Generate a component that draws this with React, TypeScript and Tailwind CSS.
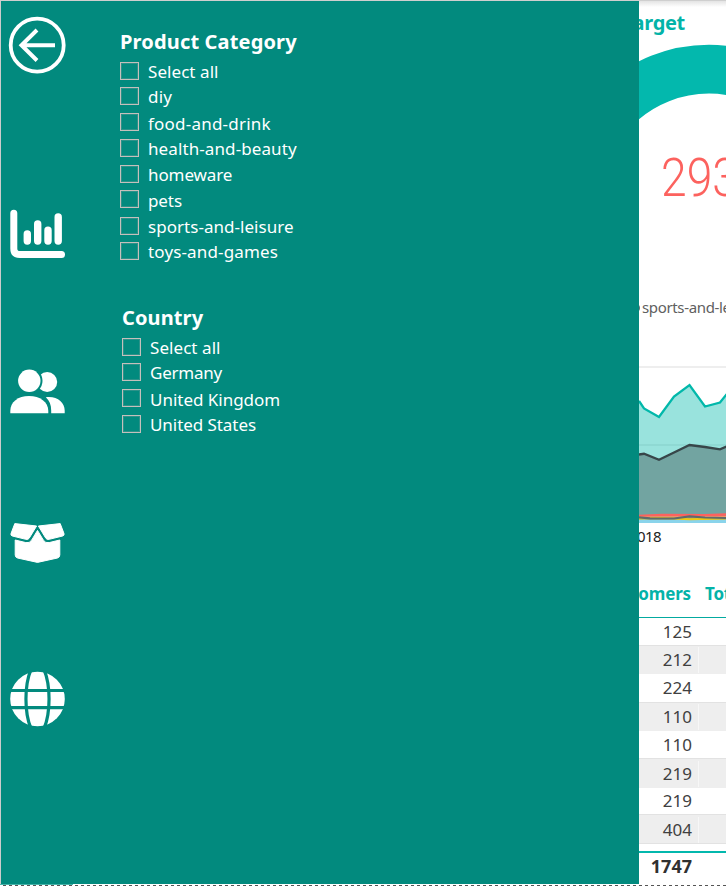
import React from 'react';

type Option = { label: string; row: string; text: string };

const categories: Option[] = [
  { label: 'Select all', row: 'h-[25px]', text: 'tracking-[0.06px]' },
  { label: 'diy', row: 'h-[26px]', text: 'tracking-[0.2px]' },
  { label: 'food-and-drink', row: 'h-[26px]', text: 'pt-px tracking-[0.22px]' },
  { label: 'health-and-beauty', row: 'h-[26px]', text: 'tracking-[0.1px]' },
  { label: 'homeware', row: 'h-[25px]', text: 'tracking-[-0.1px]' },
  { label: 'pets', row: 'h-[27px]', text: 'pt-px tracking-[-0.1px]' },
  { label: 'sports-and-leisure', row: 'h-[25px]', text: 'tracking-[0.04px]' },
  { label: 'toys-and-games', row: 'h-[26px]', text: 'tracking-[0.15px]' },
];

const countries: Option[] = [
  { label: 'Select all', row: 'h-[25px]', text: 'tracking-[0.06px]' },
  { label: 'Germany', row: 'h-[26px]', text: 'tracking-[-0.22px]' },
  { label: 'United Kingdom', row: 'h-[26px]', text: 'pt-px tracking-[-0.02px]' },
  { label: 'United States', row: 'h-[26px]', text: 'tracking-[-0.06px]' },
];

const rows = [
  { value: '125', style: 'h-[27px] bg-white', cell: 'border-transparent' },
  { value: '212', style: 'h-[29px] border-t border-[#e2e2e2] bg-[#eeeeee]', cell: 'border-[#f7f7f7]' },
  { value: '224', style: 'h-[28px] bg-white', cell: 'border-transparent' },
  { value: '110', style: 'h-[29px] border-t border-[#e2e2e2] bg-[#eeeeee]', cell: 'border-[#f7f7f7]' },
  { value: '110', style: 'h-[27px] bg-white', cell: 'border-transparent' },
  { value: '219', style: 'h-[30px] border-t border-[#e2e2e2] bg-[#eeeeee]', cell: 'border-[#f7f7f7]' },
  { value: '219', style: 'h-[26px] bg-white', cell: 'border-transparent' },
  { value: '404', style: 'h-[30px] border-y border-[#e2e2e2] bg-[#eeeeee] pt-[2px]', cell: 'border-[#f7f7f7]' },
];

function Slicer({ title, options, titleClass }: { title: string; options: Option[]; titleClass: string }) {
  return (
    <section>
      <h2 className={`h-[32px] whitespace-nowrap text-[20px] font-bold leading-[24px] ${titleClass}`}>{title}</h2>
      {options.map((o) => (
        <label key={o.label} className={`flex items-start ${o.row}`}>
          <span className="h-[18px] w-[19px] shrink-0 border border-[#c5c0bc] shadow-[inset_0_0_0_1px_rgba(170,170,170,0.25)]" />
          <span className={`ml-[9px] whitespace-nowrap text-[17px] leading-[20px] ${o.text}`}>{o.label}</span>
        </label>
      ))}
    </section>
  );
}

function BackIcon() {
  return (
    <svg className="block h-[58px] w-[58px]" viewBox="8 16 58 58" fill="none" stroke="white">
      <circle cx="37.2" cy="45.2" r="26.5" strokeWidth="3.8" />
      <path d="M55 45.2H22M37 30 21.5 45.2 37 60.5" strokeWidth="4" />
    </svg>
  );
}

function ChartIcon() {
  return (
    <svg className="block h-[50px] w-[58px]" viewBox="8 209 58 50" fill="none" stroke="white" strokeLinecap="round">
      <path d="M13.8 213.3V248.5Q13.8 254.6 20 254.6H61.5" strokeWidth="7" />
      <path d="M27.3 234V241M37.7 224V241M48 230.3V241M58.2 217V241" strokeWidth="7.4" />
    </svg>
  );
}

function PeopleIcon() {
  return (
    <svg className="block h-[46px] w-[58px]" viewBox="8 368 58 46" fill="white">
      <circle cx="47.2" cy="382" r="10" />
      <circle cx="29.3" cy="380.8" r="13.2" fill="#028a7e" />
      <circle cx="29.3" cy="380.8" r="11.2" />
      <path d="M10.3 413.3V411C10.3 402 18 396 29 396S48.3 402 48.3 411V413.3Z" />
      <path d="M45.8 397.2C57 395.8 64.7 402 64.7 410.6V413.3H51.2V410.5C51.2 405 49.5 400.5 45.8 397.2Z" />
    </svg>
  );
}

function BoxIcon() {
  return (
    <svg className="block h-[42px] w-[58px]" viewBox="8 522 58 42" fill="white" stroke="white" strokeWidth="1" strokeLinejoin="round">
      <path d="M14.8 523.6 36.6 526 29.2 538.2Q28 540 25.8 539.3L12.3 536Q10.4 535.4 11 533.6Z" />
      <path d="M60.2 523.6 38.4 526 45.8 538.2Q47 540 49.2 539.3L62.7 536Q64.6 535.4 64 533.6Z" />
      <path d="M15.2 540 25.8 542.6Q29.6 543.4 31.6 540.2L37.5 530.4 43.4 540.2Q45.4 543.4 49.2 542.6L59.8 540V555Q59.8 557.3 57.5 558L37.5 562.4 17.5 558Q15.2 557.3 15.2 555Z" />
    </svg>
  );
}

function GlobeIcon() {
  return (
    <svg className="block h-[58px] w-[58px]" viewBox="8 670 58 58">
      <circle cx="37.5" cy="699" r="27.3" fill="white" />
      <g fill="none" stroke="#028a7e" strokeWidth="3.2">
        <path d="M8 690.5H67M8 707.7H67" />
        <path d="M31.2 669C24.2 685 24.2 713 31.2 729M43.8 669C50.8 685 50.8 713 43.8 729" />
      </g>
    </svg>
  );
}

function Gauge() {
  return (
    <svg className="block h-[240px] w-[87px]" viewBox="639 36 87 240">
      <circle cx="709" cy="202" r="132.8" fill="none" stroke="#03b8ad" strokeWidth="48.8" pathLength="100" strokeDasharray="50 50" strokeDashoffset="50" />
      <text x="661" y="196" fill="#fc625e" fontFamily="Roboto, sans-serif" fontWeight="300" fontSize="53" textLength="77" lengthAdjust="spacingAndGlyphs">293</text>
    </svg>
  );
}

function AreaChart() {
  return (
    <svg className="block h-[160px] w-[87px]" viewBox="639 364 87 160">
      <path d="M639 367H726M639 445H726" stroke="#eeeeee" strokeWidth="2" />
      <path d="M639 401 644 408.5 659 417 674 396.5 689.5 385 705 406.5 720 402.5 730 390V523H639Z" fill="#01b8aa" fillOpacity=".4" />
      <path d="M639 454.5 644 453.8 659 459.8 674 452.5 689.5 445 705 447 720 449.3 730 445V523H639Z" fill="#374649" fillOpacity=".4" />
      <path d="M639 401 644 408.5 659 417 674 396.5 689.5 385 705 406.5 720 402.5 730 390" fill="none" stroke="#01b8aa" strokeWidth="2.3" />
      <path d="M639 454.5 644 453.8 659 459.8 674 452.5 689.5 445 705 447 720 449.3 730 445" fill="none" stroke="#374649" strokeWidth="2.3" />
      <path d="M639 519.5H726V523H639Z" fill="#8ad4eb" />
      <path d="M639 516 662 515 705 515.2 726 514.5" fill="none" stroke="#fd625e" strokeWidth="2.6" />
      <path d="M639 517.3 674 517 726 516.8" fill="none" stroke="#fe9666" strokeWidth="1.5" />
      <path d="M639 518.6 662 518 689.5 519.2 726 518.6" fill="none" stroke="#f2c80f" strokeWidth="2" />
      <path d="M639 517.3 650 518.4 674 518.5 689.5 516.3 705 517.5 726 518" fill="none" stroke="#5f6b6d" strokeWidth="2.2" />
    </svg>
  );
}

export default function App() {
  return (
    <div className="relative flex h-[886px] w-[726px] flex-col overflow-hidden bg-white font-['Noto_Sans','Open_Sans',sans-serif]">
      <div className="h-px shrink-0 bg-[#cfcfcf]" />
      <div className="flex h-[883px] shrink-0">
        <aside className="flex w-[639px] shrink-0 border-l border-[#cccccc] bg-[#028a7e] text-white">
          <nav className="flex w-[119px] flex-col pl-[7px]">
            <div className="h-[193px] pt-[15px]"><BackIcon /></div>
            <div className="h-[159px] pt-[15px]"><ChartIcon /></div>
            <div className="h-[154px] pt-[15px]"><PeopleIcon /></div>
            <div className="h-[148px] pt-[15px]"><BoxIcon /></div>
            <div className="pt-[15px]"><GlobeIcon /></div>
          </nav>
          <div className="flex flex-col pt-[29px]">
            <Slicer title="Product Category" options={categories} titleClass="tracking-[0.16px]" />
            <div className="ml-[2px] mt-[38px]">
              <Slicer title="Country" options={countries} titleClass="tracking-[0.12px]" />
            </div>
          </div>
        </aside>
        <main className="flex w-[87px] flex-col overflow-hidden">
          <div className="flex h-[35px] shrink-0 justify-end bg-gradient-to-b from-[#e4e4e4] from-0% to-white to-[6px] pr-[41px] pt-[9px]">
            <span className="text-[20px] font-bold leading-[26px] tracking-[-0.3px] text-[#03b3a8]">Target</span>
          </div>
          <Gauge />
          <div className="flex h-[88px] shrink-0 items-start pt-[21px] text-[#606060]">
            <span className="-ml-[9px] mt-[6px] h-[10px] w-[10px] shrink-0 rounded-full bg-[#5f6b6d]" />
            <span className="ml-[2px] whitespace-nowrap text-[15px] leading-[20px] tracking-[-0.35px]">sports-and-leisure</span>
          </div>
          <AreaChart />
          <div className="flex h-[54px] shrink-0 justify-end pr-[65px] pt-[2px] text-[15px] leading-[20px] tracking-[-0.6px] text-[#222222]">2018</div>
          <div className="flex h-[40px] shrink-0 items-start border-b border-[#03aaa0] pt-[6px] text-[17px] font-bold leading-[20px] text-[#03b3a8]">
            <span className="flex w-[52px] shrink-0 justify-end tracking-[-0.15px]">Customers</span>
            <span className="ml-[14px] whitespace-nowrap tracking-[-0.2px]">Total</span>
          </div>
          {rows.map((r, i) => (
            <div key={i} className={`flex shrink-0 items-center ${r.style}`}>
              <span className={`w-[60px] border-r pr-[6px] text-right text-[17px] leading-[26px] text-[#404040] ${r.cell}`}>{r.value}</span>
            </div>
          ))}
          <div className="mt-[7px] flex h-[33px] shrink-0 items-center border-t-2 border-[#03b8ad] pb-[5px]">
            <span className="w-[53px] text-right text-[18px] font-bold leading-[24px] text-[#303030]">1747</span>
          </div>
        </main>
      </div>
      <div className="flex h-[2px] shrink-0">
        <div className="h-px w-[73px] bg-[#47b5ab]" />
      </div>
      <svg className="absolute bottom-0 left-0 h-px w-full" viewBox="0 0 726 1">
        <path d="M3 .5H726" stroke="#555555" strokeDasharray="3 3" />
      </svg>
    </div>
  );
}
